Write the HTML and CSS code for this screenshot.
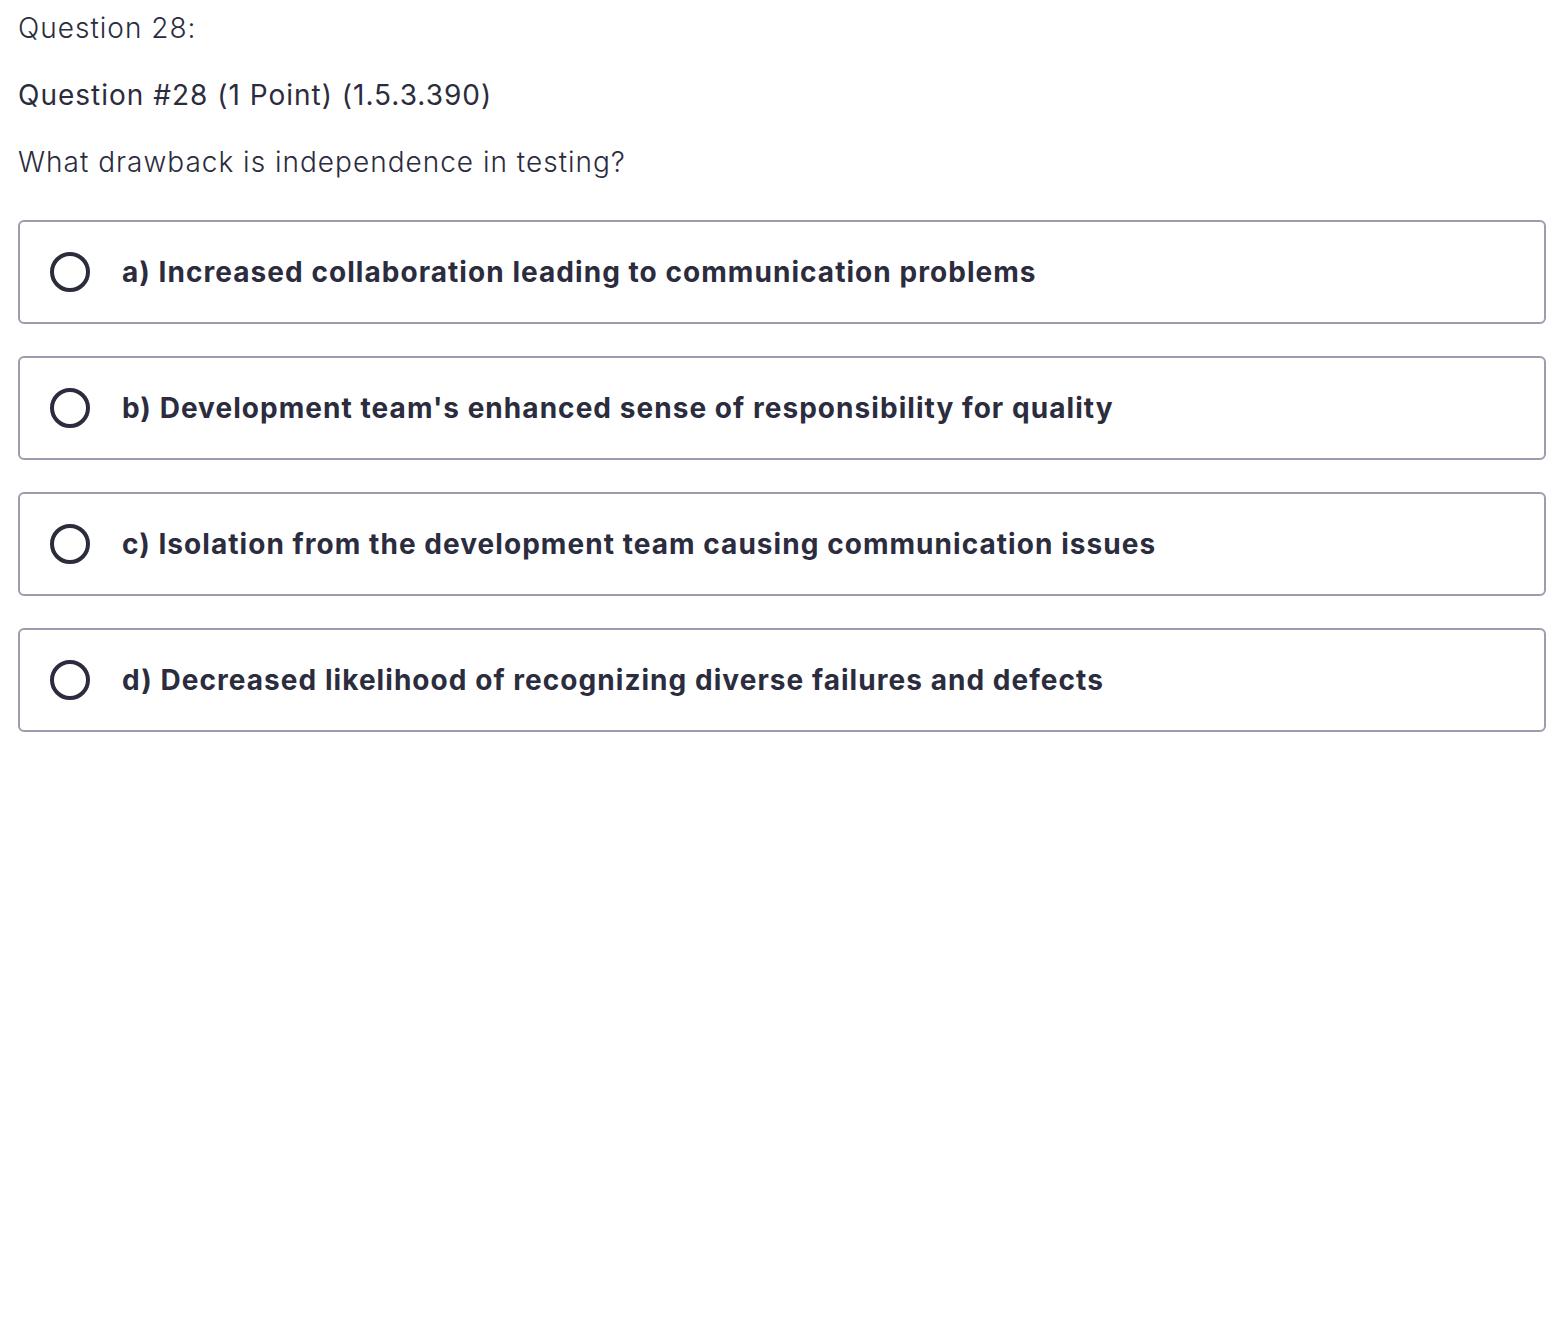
FILE: index.html
```html
<!DOCTYPE html>
<html lang="en">
<head>
    <meta charset="UTF-8">
    <title>Question 28</title>
    <link rel="stylesheet" href="styles.css">
</head>
<body>
    <div class="quiz">
        <p class="q-number">Question 28:</p>
        <p class="q-title">Question #28 (1 Point) (1.5.3.390)</p>
        <p class="q-text">What drawback is independence in testing?</p>
        <div class="options">
            <label class="option"><span class="radio"></span><span class="option-text">a) Increased collaboration leading to communication problems</span></label>
            <label class="option"><span class="radio"></span><span class="option-text">b) Development team's enhanced sense of responsibility for quality</span></label>
            <label class="option"><span class="radio"></span><span class="option-text">c) Isolation from the development team causing communication issues</span></label>
            <label class="option"><span class="radio"></span><span class="option-text">d) Decreased likelihood of recognizing diverse failures and defects</span></label>
        </div>
    </div>
</body>
</html>
```

FILE: styles.css
```css
body { margin: 0; background: #fff; font-family: Inter, "Liberation Sans", sans-serif; color: #2b2c3e; }
.quiz { padding: 8px 20px 0 18px; }
.q-number, .q-title, .q-text { margin: 0; font-size: 28px; line-height: 40px; letter-spacing: 1px; }
.q-number { font-weight: 300; }
.q-title { font-weight: 400; margin-top: 27px; }
.q-text { font-weight: 300; margin-top: 27px; }
.options { display: flex; flex-direction: column; gap: 32px; margin-top: 38px; }
.option { display: flex; align-items: center; height: 104px; box-sizing: border-box; border: 2px solid #9c9cb0; border-radius: 6px; padding-left: 30px; cursor: pointer; }
.radio { width: 40px; height: 40px; box-sizing: border-box; border: 4px solid #2b2c3e; border-radius: 50%; flex-shrink: 0; }
.option-text { margin-left: 32px; font-size: 28px; font-weight: 700; letter-spacing: 1.05px; }
```
